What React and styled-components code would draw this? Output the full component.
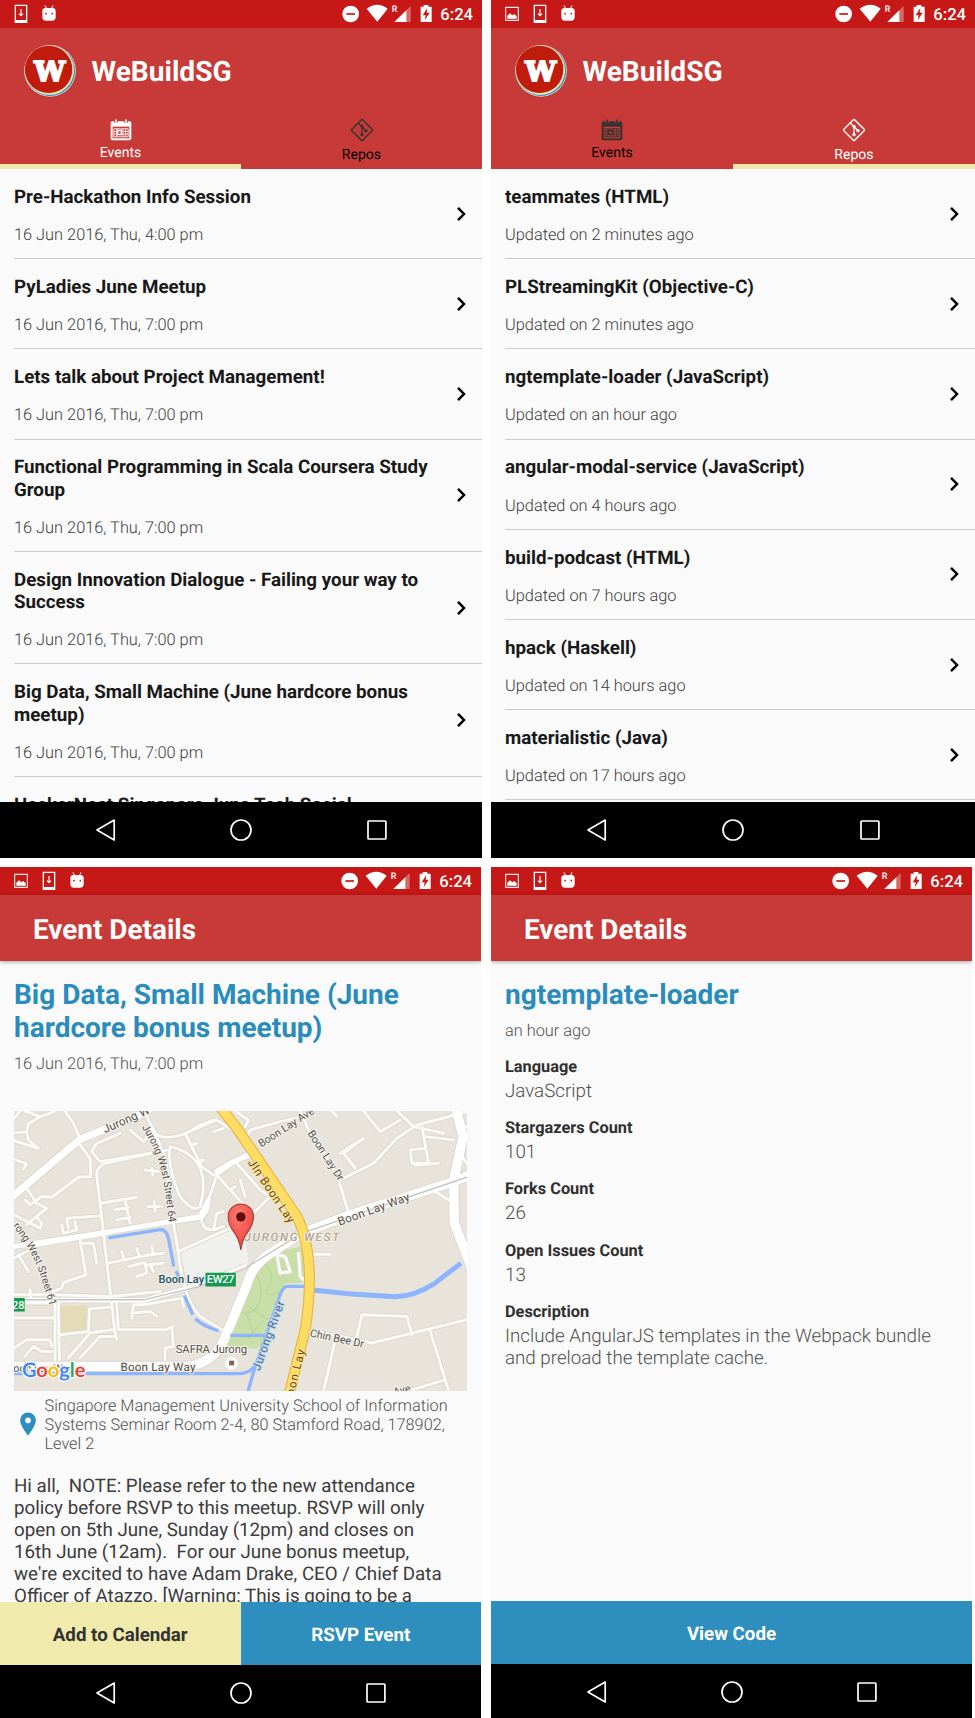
import React from "react";
import styled, { createGlobalStyle } from "styled-components";

const GlobalStyle = createGlobalStyle`
  * { box-sizing: border-box; }
  body { margin: 0; background: #fff; font-family: Roboto, "Liberation Sans", sans-serif; text-rendering: geometricPrecision; }
  svg { display: block; flex: none; }
  h1, h2, h3, p, dl, dt, dd, ul { margin: 0; padding: 0; font-size: inherit; font-weight: inherit; }
`;

const Gallery = styled.main`
  width: 975px;
  height: 1718px;
  overflow: hidden;
  display: grid;
  grid-template-columns: 482px 484px;
  grid-template-rows: 858px 851px;
  gap: 9px;
`;

const Phone = styled.section`
  width: ${(p) => p.$width}px;
  display: flex;
  flex-direction: column;
  overflow: hidden;
  background: #fafafa;
`;

/* ---------- status bar ---------- */

const StatusBarRoot = styled.div`
  flex: none;
  height: 28px;
  padding: 0 9px 0 14px;
  display: flex;
  align-items: center;
  justify-content: space-between;
  background: #c61816;
`;

const Notifications = styled.div`
  display: flex;
  gap: 14px;
`;

const SystemInfo = styled.div`
  display: flex;
  align-items: center;
  gap: 8px;
`;

const Clock = styled.span`
  padding-top: 3px;
  color: #fff;
  font-size: 16.6px;
  font-weight: 500;
  line-height: 25px;
`;

const PictureIcon = () => (
  <svg width="14" height="20" viewBox="0 0 42 60">
    <path d="M2 10h38v39H2z" fill="none" stroke="#fbe9e8" strokeWidth="3.4" />
    <path d="M7 44v-9l8-7 7 6 6-4 7 7v7z" fill="#fff" />
  </svg>
);

const DownloadIcon = () => (
  <svg width="14" height="20" viewBox="0 0 42 60">
    <path d="M4 4h34v51H4z" fill="none" stroke="#fff" strokeWidth="4" />
    <path d="M3 48h36v9H3z" fill="#fff" />
    <path d="M21 15v20m-6-6 6 6 6-6" fill="none" stroke="#fff" strokeWidth="3.4" />
  </svg>
);

const AndroidIcon = () => (
  <svg width="14" height="20" viewBox="0 0 42 60">
    <path d="m9 4 5 10M33 4l-5 10" stroke="#fff" strokeWidth="3" />
    <path d="M1 22a10 10 0 0 1 10-10h20a10 10 0 0 1 10 10v17a11 11 0 0 1-11 11H12A11 11 0 0 1 1 39z" fill="#fff" />
    <circle cx="12" cy="29" r="2.6" fill="#c61816" />
    <circle cx="31" cy="29" r="2.6" fill="#c61816" />
  </svg>
);

const SystemIcons = () => (
  <svg width="90" height="20" viewBox="0 0 270 60">
    <circle cx="26" cy="30" r="25" fill="#fff" />
    <path d="M13 30h26" stroke="#c61816" strokeWidth="5" />
    <path d="M74 14Q106-9 137 14L106 53z" fill="#fff" />
    <text x="149" y="25" fontSize="27" fontWeight="500" fill="#fff" fontFamily="Roboto, sans-serif">R</text>
    <path d="M157 54 206 6V54z" fill="#fff" fillOpacity=".35" />
    <path d="M157 54 193 19V54z" fill="#fff" />
    <path d="M236 8h9V3h14v5h10v46h-33z" fill="#fff" />
    <path d="M256 12 242 34h9l-3 15 15-23h-9z" fill="#c61816" />
  </svg>
);

const StatusBar = ({ picture }) => (
  <StatusBarRoot>
    <Notifications>
      {picture && <PictureIcon />}
      <DownloadIcon />
      <AndroidIcon />
    </Notifications>
    <SystemInfo>
      <SystemIcons />
      <Clock>6:24</Clock>
    </SystemInfo>
  </StatusBarRoot>
);

/* ---------- system navigation ---------- */

const NavRoot = styled.nav`
  flex: none;
  height: ${(p) => p.$height}px;
  padding: ${(p) => 56 - p.$height}px 94.5px 0 94.5px;
  display: flex;
  align-items: center;
  justify-content: space-between;
  background: #000;
`;

const SystemNav = ({ height }) => (
  <NavRoot $height={height}>
    <svg width="24" height="24" viewBox="0 0 24 24">
      <path d="M2 12 19.200 2.100V21.900z" fill="none" stroke="#fff" strokeWidth="1.700" strokeLinejoin="round" />
    </svg>
    <svg width="24" height="24" viewBox="0 0 24 24">
      <circle cx="12" cy="12" r="10" fill="none" stroke="#fff" strokeWidth="1.700" />
    </svg>
    <svg width="24" height="24" viewBox="0 0 24 24">
      <rect x="4" y="3" width="17.900" height="18" rx=".8" fill="none" stroke="#fff" strokeWidth="1.700" />
    </svg>
  </NavRoot>
);

/* ---------- list screens ---------- */

const AppHeader = styled.header`
  flex: none;
  height: 141px;
  display: flex;
  flex-direction: column;
  background: #c83a38;
`;

const Brand = styled.div`
  height: 85px;
  padding-left: 22.5px;
  display: flex;
  align-items: center;
  gap: 15px;
`;

const BrandName = styled.h1`
  color: #fff;
  font-size: 28.1px;
  font-weight: 700;
  line-height: 33px;
  padding-top: 2px;
`;

const Logo = () => (
  <svg width="54" height="54" viewBox="0 0 54 54">
    <circle cx="27" cy="27.400" r="26.200" fill="#a92f2e" />
    <circle cx="27" cy="26.900" r="25.900" fill="#eddcda" />
    <circle cx="26.900" cy="26.800" r="25.200" fill="#2d8fbd" />
    <circle cx="26.300" cy="26.100" r="24.700" fill="#f3f1dc" />
    <circle cx="26.100" cy="25.900" r="24.300" fill="#f0df95" />
    <circle cx="25.600" cy="25.400" r="23.700" fill="#bf1c0d" />
    <text x="26.700" y="36.900" textAnchor="middle" fontFamily="DejaVu Serif, serif" fontWeight="700" fontSize="27.500" fill="#fff" stroke="#fff" strokeWidth="2">W</text>
  </svg>
);

const Tabs = styled.div`
  flex: 1;
  display: grid;
  grid-template-columns: 1fr 1fr;
`;

const Tab = styled.div`
  display: flex;
  flex-direction: column;
  align-items: center;
  padding-top: 5px;
  gap: ${(p) => p.$gap}px;
  border-bottom: 5px solid ${(p) => (p.$active ? "#f0e7a9" : "transparent")};
  color: ${(p) => (p.$active ? "#fff" : "#000")};
`;

const TabLabel = styled.span`
  font-size: 14.05px;
  line-height: 17px;
`;

const CalendarIcon = ({ active }) => {
  const c = active ? "#fff" : "#333";
  return (
    <svg width="24" height="24" viewBox="0 0 72 72">
      <path d="M10 10h5a6 6 0 0 0 12 0h18a6 6 0 0 0 12 0h5a5 5 0 0 1 5 5v46a6 6 0 0 1-6 6H11a6 6 0 0 1-6-6V15a5 5 0 0 1 5-5z" fill={c} />
      <path d="M21 6v7M51 6v7" stroke={c} strokeWidth="5" strokeLinecap="round" />
      <path d="M11 26h50v35H11z" fill="#c83a38" />
      <path d="M14.500 32.500h43v24h-43zM14 40.500h44M14 48.500h44M42 31v26M50 31v26M23 31v26" stroke={c} strokeWidth="2.600" fill="none" />
      <path d="M24 35h15v17H24z" fill={c} />
      <path d="M28 40h7v7h-7z" fill="#c83a38" />
    </svg>
  );
};

const GitIcon = ({ active }) => {
  const c = active ? "#fff" : "#333";
  return (
    <svg width="24" height="24" viewBox="0 0 72 72">
      <path d="M34 5.500 5.500 34q-2 2 0 4L34 66.500q2 2 4 0L66.500 38q2-2 0-4L38 5.500q-2-2-4 0z" fill="none" stroke={c} strokeWidth="4" />
      <path d="M25 15 48 38M36 24v27" stroke={c} strokeWidth="4" />
      <circle cx="36" cy="25" r="4.500" fill={c} />
      <circle cx="36" cy="50" r="5" fill={c} />
      <circle cx="48" cy="38" r="5" fill={c} />
    </svg>
  );
};

const List = styled.ul`
  flex: 1;
  min-height: 0;
  overflow: hidden;
  padding-left: 14px;
  list-style: none;
`;

const Row = styled.li`
  display: flex;
  align-items: center;
  justify-content: space-between;
  padding-right: 14px;
  border-bottom: 1px solid #cbcbcb;
`;

const RowText = styled.div`
  width: 424px;
  padding: 16.9px 0 14.05px;
  display: flex;
  flex-direction: column;
  gap: 16.8px;
`;

const RowTitle = styled.h2`
  color: #191919;
  font-size: 18.76px;
  font-weight: 700;
  line-height: 22.25px;
`;

const RowMeta = styled.p`
  color: #3c3c3c;
  font-size: 16.35px;
  font-weight: 300;
  line-height: 19.2px;
`;

const Chevron = () => (
  <svg width="14" height="16" viewBox="0 0 14 16">
    <path d="m4 1.800 6 6.200-6 6.200" fill="none" stroke="#000" strokeWidth="2.500" />
  </svg>
);

const ListScreen = ({ width, active, picture, items }) => (
  <Phone $width={width}>
    <StatusBar picture={picture} />
    <AppHeader>
      <Brand>
        <Logo />
        <BrandName>WeBuildSG</BrandName>
      </Brand>
      <Tabs>
        <Tab $active={active === "events"} $gap={3}>
          <CalendarIcon active={active === "events"} />
          <TabLabel>Events</TabLabel>
        </Tab>
        <Tab $active={active === "repos"} $gap={5}>
          <GitIcon active={active === "repos"} />
          <TabLabel>Repos</TabLabel>
        </Tab>
      </Tabs>
    </AppHeader>
    <List>
      {items.map(([title, meta]) => (
        <Row key={title}>
          <RowText>
            <RowTitle>{title}</RowTitle>
            <RowMeta>{meta}</RowMeta>
          </RowText>
          <Chevron />
        </Row>
      ))}
    </List>
    <SystemNav height={56} />
  </Phone>
);

/* ---------- detail screens ---------- */

const DetailHeader = styled.header`
  flex: none;
  height: 66px;
  padding: 2px 0 0 33px;
  display: flex;
  align-items: center;
  background: #c83a38;
  color: #fff;
  font-size: 27.9px;
  font-weight: 700;
  box-shadow: 0 1px 4px rgba(0, 0, 0, 0.35);
`;

const DetailBody = styled.div`
  flex: 1;
  min-height: 0;
  overflow: hidden;
  padding: 17px 14px 0;
`;

const DetailTitle = styled.h2`
  color: #2a8cba;
  font-size: 28px;
  font-weight: 700;
  line-height: 33px;
`;

const DetailDate = styled.p`
  margin-top: 10px;
  color: #505050;
  font-size: 16.35px;
  font-weight: 300;
  line-height: 19px;
`;

const MapFrame = styled.div`
  margin-top: 38px;
  height: 280px;
  overflow: hidden;
`;

const Address = styled.div`
  margin-top: 5px;
  padding-left: 6px;
  display: flex;
  align-items: center;
  gap: 8.5px;
`;

const AddressText = styled.p`
  width: 410px;
  color: #505050;
  font-size: 16.27px;
  font-weight: 300;
  line-height: 19.1px;
`;

const Blurb = styled.p`
  margin-top: 22.2px;
  color: #3c3c3c;
  font-size: 18.74px;
  line-height: 22px;
  white-space: pre;
`;

const Fields = styled.dl`
  margin-top: 17px;
  display: flex;
  flex-direction: column;
  gap: 16.2px;
`;

const FieldLabel = styled.dt`
  color: #303030;
  font-size: 16.35px;
  font-weight: 700;
  line-height: 19px;
`;

const FieldValue = styled.dd`
  padding-top: 4px;
  color: #505050;
  font-size: 18.76px;
  font-weight: 300;
  line-height: 22px;
`;

const Actions = styled.div`
  flex: none;
  height: 63px;
  display: flex;
`;

const Action = styled.button`
  flex: 1;
  border: 0;
  padding: 2px 0 0;
  font: 700 18.74px Roboto, sans-serif;
  text-rendering: inherit;
  background: ${(p) => (p.$pale ? "#f0eaac" : "#2e8fbe")};
  color: ${(p) => (p.$pale ? "#333" : "#fff")};
`;

/* ---------- map ---------- */

const streets = [
  "M60 33 42 55M75 33 120 50 150 40 165 33M120 50 85 72 80 95 42 98M80 95 85 120 115 145 42 122M42 178 80 192 70 208M195 33 220 70 240 115",
  "M240 135 270 175 272 230M272 230 235 232 155 292 125 290 90 315 75 300M80 265 110 310 140 325 115 345 80 375M42 345 120 385 125 370 110 350",
  "M290 225Q290 200 315 190L500 150M290 225 345 700M275 155 300 185 450 160M275 155 290 130 360 100M390 90 430 125 445 105",
  "M300 310 410 292M345 330 385 322M350 360 390 352M375 300 390 370M200 355 300 348M185 375 190 400 230 390 225 365M200 355 205 385",
  "M42 440 600 355Q630 340 625 300L650 225 735 165M42 475 90 450M55 465 85 515M95 440 330 400M240 420 258 525 190 548 185 565 160 575M240 430 280 430 290 490",
  "M440 50Q480 120 500 200Q515 300 520 370L535 460Q550 600 600 650L665 690M510 140Q640 170 600 320Q580 340 540 290Q500 200 510 140",
  "M450 80Q470 120 520 110Q560 105 590 80L640 60M555 100 605 200 640 225M555 100 650 60 735 115M640 95 670 85M575 135 590 130M590 185 610 180",
  "M605 350Q600 390 640 390L670 380M640 390 650 340 670 335M650 225 735 320M690 270 705 260M535 455 690 385",
  "M325 490 450 465 490 460M365 455 372 480M410 445 418 470M455 440 460 465M385 500 435 488 440 520 410 530M450 495 460 515M445 495 490 490",
  "M42 585 160 585M90 570 92 590M42 655 165 655M42 610 150 610M165 600 165 780M175 600 178 780M180 705 265 695 268 628 330 622",
  "M42 745 80 720 150 720 155 740M75 770 100 740 125 755 155 755M205 775 270 700 335 690M240 775 300 710 340 710M350 612 355 690 500 690 515 680 520 740 495 745 495 780",
  "M395 655 400 615 440 615M395 640 450 635 470 650M430 615 545 595 550 620M345 700 350 720M160 585 330 590 480 575",
  "M445 320 485 320M462 305 465 335M435 210 475 215M455 205 458 225",
  "M705 33 745 60 735 80M710 190 780 270 810 290 760 340M735 120 750 90 840 65 910 50M720 240 735 290M900 33 925 90 980 170 1015 240 1045 340",
  "M995 33 1010 50M1090 33 1140 95 1200 60M1190 33 1240 80 1330 100M1030 235 1120 190 1190 115 1250 75 1400 35M1020 160 1090 115 1030 160 1065 205",
  "M1265 80 1285 190 1235 190 1230 150 1275 145M1245 195 1315 190M1275 110 1360 120M1290 265 1345 300M1380 90 1400 80M1375 155 1400 190",
  "M935 463 990 463M925 690 1115 730 1400 660M1065 730 1085 645 1220 650 1235 705M1290 695 1345 874M1005 720 970 874M1225 874 1335 840",
  "M830 465 855 470 870 515 840 520 830 465M895 460 900 530 915 545",
];

const majors = [
  { d: "M35 292 240 118 420 45 460 20", w: 22 },
  { d: "M35 800 560 800Q625 795 665 735L705 640 740 555Q755 490 835 445L905 400 1035 350 1345 250 1410 225", w: 28 },
  { d: "M1365 20 1388 110 1360 240 1362 370 1410 495", w: 28 },
  { d: "M650 215 700 185 770 155", w: 16 },
  { d: "M42 440 345 393 600 350 625 300", w: 15 },
  { d: "M42 600 430 602 600 555 735 500", w: 14 },
];

const MapView = () => (
  <svg width="453" height="280" viewBox="42 33 1358 841" preserveAspectRatio="none" fontFamily="Roboto, sans-serif">
    <path d="M42 33h1358v841H42z" fill="#e8e4dc" />
    <path d="M180 620 260 615 262 698 180 706z" fill="#e6dbb9" />
    <path d="M540 455 690 385 735 400 745 500 620 545 565 565z" fill="#f0f1ec" />
    <path d="M830 455 905 440 918 548 855 552 835 600 800 720 770 748 670 738 705 640 740 545 765 490z" fill="#c9dfa8" />
    <g fill="none" stroke="#b8d097" strokeWidth="3">
      <path d="M780 480Q830 520 805 560T840 575M765 520Q790 560 780 600T735 640M830 500 860 545M705 660Q730 610 750 670T720 710M745 620 810 665M790 480 750 520M750 710 790 660" />
    </g>
    <g fill="none" stroke="#dbd6ca" strokeLinejoin="round" strokeLinecap="round">
      {streets.map((d) => <path key={d} d={d} strokeWidth="14" />)}
      {majors.map((m) => <path key={m.d} d={m.d} strokeWidth={m.w + 5} />)}
    </g>
    <g fill="none" stroke="#fafaf7" strokeLinejoin="round" strokeLinecap="round">
      {streets.map((d) => <path key={d} d={d} strokeWidth="9" />)}
      {majors.map((m) => <path key={m.d} d={m.d} strokeWidth={m.w} stroke="#fff" />)}
    </g>
    <path d="M42 600H430L600 560 735 505 905 400 1400 232" fill="none" stroke="#c4c4c0" strokeWidth="4" />
    <g fill="none" stroke="#8db5fd" strokeWidth="10" strokeLinejoin="round">
      <path d="M325 414 480 389Q500 388 506 420L521 500M528 514 536 532M553 588 578 645M585 657Q610 680 655 693" />
      <path d="M690 707H795M742 880 765 800 835 600Q845 562 860 560H915" />
      <path d="M42 822H720Q750 820 768 795" />
      <path d="M930 570 1055 583 1185 591Q1240 590 1300 553L1382 490" strokeWidth="15" />
    </g>
    <g fill="none" strokeLinejoin="round">
      <path d="M655 15 710 85 765 165 890 350Q925 420 928 530Q928 610 915 690L865 890" stroke="#e6b548" strokeWidth="33" />
      <path d="M655 15 710 85 765 165 890 350Q925 420 928 530Q928 610 915 690L865 890" stroke="#ffdc62" strokeWidth="26" />
    </g>
    <defs>
      <path id="street64" d="M425 82Q475 160 488 235T508 385" />
      <path id="street61" d="M38 378Q95 450 115 510T155 635" />
      <path id="jalan" d="M742 188 880 393" />
      <radialGradient id="pin" cx=".4" cy=".25" r=".8">
        <stop offset="0" stopColor="#ff7a70" />
        <stop offset="1" stopColor="#e93f38" />
      </radialGradient>
    </defs>
    <g fontSize="35" fill="#55504a" stroke="#f7f5f0" strokeWidth="6" paintOrder="stroke" strokeLinejoin="round">
      <text transform="translate(315 100) rotate(-24)" textLength="150">Jurong W</text>
      <text fontSize="32"><textPath href="#street64" textLength="300" lengthAdjust="spacingAndGlyphs">Jurong West Street 64</textPath></text>
      <text fontSize="32"><textPath href="#street61" textLength="268" lengthAdjust="spacingAndGlyphs">rong West Street 61</textPath></text>
      <text transform="translate(783 143) rotate(-33)" fontSize="32" textLength="192" lengthAdjust="spacingAndGlyphs">Boon Lay Ave</text>
      <text transform="translate(921 100) rotate(57)" fontSize="32" textLength="172" lengthAdjust="spacingAndGlyphs">Boon Lay Dr</text>
      <text transform="translate(1018 378) rotate(-20)" textLength="226">Boon Lay Way</text>
      <text transform="translate(928 710) rotate(12)" fontSize="33" textLength="164" lengthAdjust="spacingAndGlyphs">Chin Bee Dr</text>
      <text x="361" y="815" textLength="225">Boon Lay Way</text>
      <text x="40" y="817" fontSize="32">oon Lay Way</text>
      <text x="527" y="759" fontSize="34" textLength="214">SAFRA Jurong</text>
      <text transform="translate(1182 888) rotate(-14)" fontSize="32">Ave</text>
      <text transform="translate(778 815) rotate(-70)" fill="#4a6f9c" stroke="#c5d9f0" textLength="220">Jurong River</text>
      <g fill="#6c4509" stroke="#ffe79a">
        <text fontSize="35"><textPath href="#jalan" textLength="222">Jln Boon Lay</textPath></text>
        <text transform="translate(880 890) rotate(-76)" textLength="142">oon Lay</text>
      </g>
      <text x="733" y="423" fontSize="35" fontWeight="500" fontStyle="italic" fill="#b0a58d" strokeWidth="4" textLength="284">JURONG WEST</text>
    </g>
    <circle cx="694" cy="791" r="19" fill="#fff" />
    <path d="M687 783h15v14h-15z" fill="#80625c" />
    <text x="475" y="550" fontSize="34" fontWeight="500" fill="#24506a" stroke="#f2f1ec" strokeWidth="4" paintOrder="stroke" textLength="137" lengthAdjust="spacingAndGlyphs">Boon Lay</text>
    <path d="M616 519h91v41h-91zM42 595h32v40H42z" fill="#119a50" />
    <text x="620" y="551" fontSize="34" fontWeight="500" fill="#fff" textLength="83">EW27</text>
    <text x="36" y="627" fontSize="33" fontWeight="500" fill="#fff">28</text>
    <path d="M722 450Q718 418 699 393Q684 373 684 350A38 38 0 0 1 760 350Q760 373 745 393Q726 418 722 450z" fill="url(#pin)" stroke="#a8312c" strokeWidth="3" />
    <circle cx="722" cy="351" r="14" fill="#5d0e0d" />
    <text x="66" y="832" fontFamily="Lato, sans-serif" fontWeight="700" fontSize="60" textLength="190" lengthAdjust="spacingAndGlyphs" stroke="#fff" strokeWidth="7" paintOrder="stroke" strokeLinejoin="round">
      <tspan fill="#4285f4">G</tspan><tspan fill="#ea4335">o</tspan><tspan fill="#fbbc05">o</tspan><tspan fill="#4285f4">g</tspan><tspan fill="#34a853">l</tspan><tspan fill="#ea4335">e</tspan>
    </text>
  </svg>
);

const PlaceIcon = () => (
  <svg width="16" height="26" viewBox="0 0 16 26">
    <path d="M8 .4A7.900 7.900 0 0 0 .1 8.300C.1 14 8 23.500 8 23.500S15.900 14 15.900 8.300A7.900 7.900 0 0 0 8 .4zm0 5a2.900 2.900 0 1 1 0 5.800 2.900 2.900 0 0 1 0-5.800z" fill="#2e8fbe" />
  </svg>
);

const DetailScreen = ({ children, actions, navHeight }) => (
  <Phone $width={481}>
    <StatusBar picture />
    <DetailHeader>Event Details</DetailHeader>
    <DetailBody>{children}</DetailBody>
    <Actions>{actions}</Actions>
    <SystemNav height={navHeight} />
  </Phone>
);

const events = [
  ["Pre-Hackathon Info Session", "16 Jun 2016, Thu, 4:00 pm"],
  ["PyLadies June Meetup", "16 Jun 2016, Thu, 7:00 pm"],
  ["Lets talk about Project Management!", "16 Jun 2016, Thu, 7:00 pm"],
  ["Functional Programming in Scala Coursera Study Group", "16 Jun 2016, Thu, 7:00 pm"],
  ["Design Innovation Dialogue - Failing your way to Success", "16 Jun 2016, Thu, 7:00 pm"],
  ["Big Data, Small Machine (June hardcore bonus meetup)", "16 Jun 2016, Thu, 7:00 pm"],
  ["HackerNest Singapore June Tech Social", "16 Jun 2016, Thu, 7:00 pm"],
];

const repos = [
  ["teammates (HTML)", "Updated on 2 minutes ago"],
  ["PLStreamingKit (Objective-C)", "Updated on 2 minutes ago"],
  ["ngtemplate-loader (JavaScript)", "Updated on an hour ago"],
  ["angular-modal-service (JavaScript)", "Updated on 4 hours ago"],
  ["build-podcast (HTML)", "Updated on 7 hours ago"],
  ["hpack (Haskell)", "Updated on 14 hours ago"],
  ["materialistic (Java)", "Updated on 17 hours ago"],
];

const fields = [
  ["Language", "JavaScript"],
  ["Stargazers Count", "101"],
  ["Forks Count", "26"],
  ["Open Issues Count", "13"],
  ["Description", "Include AngularJS templates in the Webpack bundle and preload the template cache."],
];

const blurb = [
  "Hi all,  NOTE: Please refer to the new attendance",
  "policy before RSVP to this meetup. RSVP will only",
  "open on 5th June, Sunday (12pm) and closes on",
  "16th June (12am).  For our June bonus meetup,",
  "we're excited to have Adam Drake, CEO / Chief Data",
  "Officer of Atazzo. [Warning: This is going to be a",
].join("\n");

export default function App() {
  return (
    <>
      <GlobalStyle />
      <Gallery>
        <ListScreen width={482} active="events" items={events} />
        <ListScreen width={484} active="repos" picture items={repos} />
        <DetailScreen
          navHeight={53}
          actions={<><Action $pale>Add to Calendar</Action><Action>RSVP Event</Action></>}
        >
          <DetailTitle>Big Data, Small Machine (June hardcore bonus meetup)</DetailTitle>
          <DetailDate>16 Jun 2016, Thu, 7:00 pm</DetailDate>
          <MapFrame><MapView /></MapFrame>
          <Address>
            <PlaceIcon />
            <AddressText>
              Singapore Management University School of Information Systems Seminar Room 2-4, 80 Stamford Road, 178902, Level 2
            </AddressText>
          </Address>
          <Blurb>{blurb}</Blurb>
        </DetailScreen>
        <DetailScreen navHeight={54} actions={<Action>View Code</Action>}>
          <DetailTitle>ngtemplate-loader</DetailTitle>
          <DetailDate>an hour ago</DetailDate>
          <Fields>
            {fields.map(([label, value]) => (
              <div key={label}>
                <FieldLabel>{label}</FieldLabel>
                <FieldValue>{value}</FieldValue>
              </div>
            ))}
          </Fields>
        </DetailScreen>
      </Gallery>
    </>
  );
}
